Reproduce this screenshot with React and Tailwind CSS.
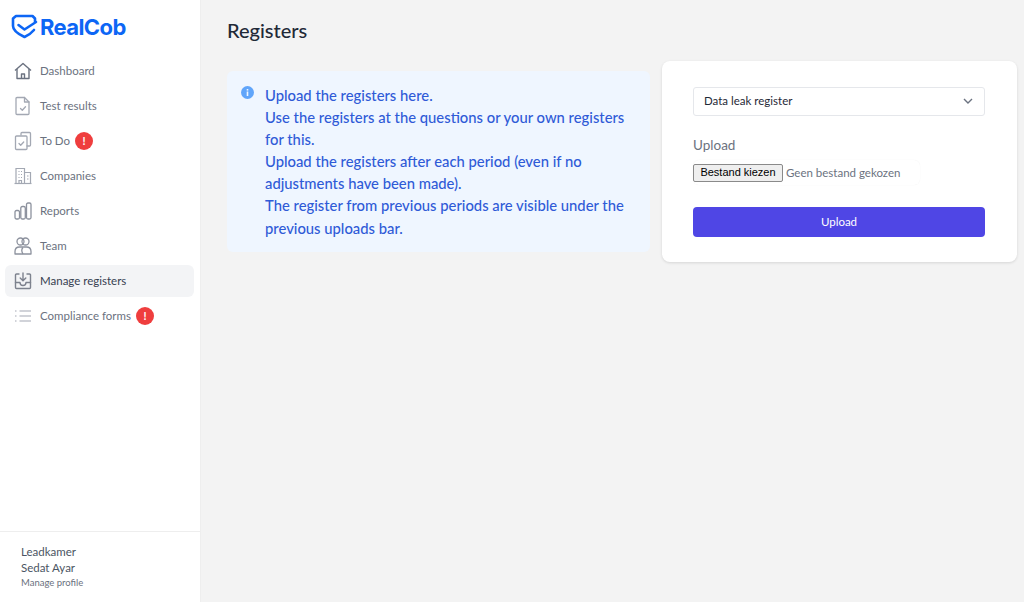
import React from 'react';

const Logo = () => (
  <svg width="27" height="26" viewBox="0 0 27 26" fill="none" stroke="#0d66f5" strokeWidth="2.600" strokeLinejoin="round" strokeLinecap="round">
    <path d="M24 7.500V4.500L21.500 2H5L2 4.500V12c0 4.500 5 8 11.500 11 3.500-1.500 7-4 9.500-7" />
    <path d="M7.500 11l6 4.500L25 8" />
  </svg>
);

const HomeIcon = () => (
  <svg width="18" height="18" viewBox="0 0 18 18" fill="none" stroke="#6b7280" strokeWidth="1.400" strokeLinejoin="round">
    <path d="M1 8.500L9 1.500l8 7" />
    <path d="M3 7v9.500h12V7" />
    <path d="M7.500 16.500v-4.500h3v4.500" />
  </svg>
);

const DocCheckIcon = () => (
  <svg width="18" height="20" viewBox="0 0 18 20" fill="none" stroke="#a3a8b3" strokeWidth="1.300" strokeLinejoin="round" strokeLinecap="round">
    <path d="M3 1.500h7.500l4.500 4.500v11.500a1 1 0 0 1-1 1H3a1 1 0 0 1-1-1v-15a1 1 0 0 1 1-1z" />
    <path d="M10.500 1.500V6H15" />
    <path d="M6.500 12.500l1.800 1.800 3.200-3.500" />
  </svg>
);

const TodoIcon = () => (
  <svg width="18" height="20" viewBox="0 0 18 20" fill="none" stroke="#a3a8b3" strokeWidth="1.300" strokeLinejoin="round" strokeLinecap="round">
    <path d="M7 4V2.500a1 1 0 0 1 1-1h7.500a1 1 0 0 1 1 1V14a1 1 0 0 1-1 1H13" />
    <path d="M2.500 5h9.500a1 1 0 0 1 1 1v11.500a1 1 0 0 1-1 1H2.500a1 1 0 0 1-1-1V6a1 1 0 0 1 1-1z" />
    <path d="M5 12.500l1.700 1.700 3-3.200" />
  </svg>
);

const BuildingIcon = () => (
  <svg width="18" height="18" viewBox="0 0 18 18" fill="none" stroke="#a3a8b3" strokeWidth="1.200">
    <path d="M.500 16.500h17" />
    <path d="M2 16.500V1.500h8.500v15" />
    <path d="M10.500 5.500h6v11" />
    <path d="M4.500 4.500h1M7 4.500h1M4.500 7.500h1M7 7.500h1M4.500 10.500h1M7 10.500h1M13 9h1.500M13 12h1.500" />
    <path d="M5 16.500v-3h2.500v3" />
  </svg>
);

const ReportsIcon = () => (
  <svg width="18" height="18" viewBox="0 0 18 18" fill="none" stroke="#8d929e" strokeWidth="1.300" strokeLinejoin="round">
    <rect x="1" y="8.500" width="4.500" height="8.500" rx="1.500" />
    <rect x="6.800" y="4.500" width="4.500" height="12.500" rx="1.500" />
    <rect x="12.500" y="1" width="4.500" height="16" rx="1.500" />
  </svg>
);

const TeamIcon = () => (
  <svg width="18" height="18" viewBox="0 0 18 18" fill="none" stroke="#8d929e" strokeWidth="1.300" strokeLinejoin="round">
    <circle cx="6.500" cy="4.500" r="3.500" />
    <circle cx="11.500" cy="4.500" r="3.500" />
    <path d="M1 17v-2.500C1 11.500 3 10 5.500 10h7c2.500 0 4.500 1.500 4.500 4.500V17z" />
    <path d="M9 10.500c-1.500 1.500-1.500 4 0 6.500" />
  </svg>
);

const InboxIcon = () => (
  <svg width="18" height="18" viewBox="0 0 18 18" fill="none" stroke="#7d828e" strokeWidth="1.400" strokeLinejoin="round" strokeLinecap="round">
    <path d="M5 2H2.500a1 1 0 0 0-1 1v12.500a1 1 0 0 0 1 1h13a1 1 0 0 0 1-1V3a1 1 0 0 0-1-1H13" />
    <path d="M1.500 10.500h4.500a3 3 0 0 0 6 0h4.500" />
    <path d="M9 1v7.500M6.200 6L9 8.800 11.800 6" />
  </svg>
);

const ListIcon = () => (
  <svg width="16" height="12" viewBox="0 0 16 12" fill="none" stroke="#a3a8b3" strokeWidth="1.200">
    <path d="M4.500 1H16M4.500 6H16M4.500 11H16" />
    <path d="M0 1h1.500M0 6h1.500M0 11h1.500" />
  </svg>
);

const Alert = () => (
  <span className="ml-[5px] flex h-[18px] w-[18px] items-center justify-center rounded-full bg-[#ef3e3e] text-[11px] font-bold text-white">
    !
  </span>
);

const navItems = [
  { label: 'Dashboard', icon: <HomeIcon /> },
  { label: 'Test results', icon: <DocCheckIcon /> },
  { label: 'To Do', icon: <TodoIcon />, alert: true },
  { label: 'Companies', icon: <BuildingIcon /> },
  { label: 'Reports', icon: <ReportsIcon /> },
  { label: 'Team', icon: <TeamIcon /> },
  { label: 'Manage registers', icon: <InboxIcon />, active: true },
  { label: 'Compliance forms', icon: <ListIcon />, alert: true },
];

function Sidebar() {
  return (
    <aside className="flex h-full w-[201px] shrink-0 flex-col border-r border-[#eeeeee] bg-white">
      {/* Logo */}
      <div className="flex h-[54px] items-center gap-[2px] pl-[11px]">
        <Logo />
        <span className="font-['Inter',sans-serif] text-[22px] font-bold tracking-[-0.6px] text-[#0d66f5]">RealCob</span>
      </div>

      {/* Nav */}
      <nav className="flex flex-col gap-[3px] pl-[5px] pr-[6px] pt-[1px]">
        {navItems.map((item) => (
          <div
            key={item.label}
            className={`flex h-[32px] items-center rounded-md ${item.active ? 'bg-[#f3f4f6] text-[#374151]' : 'text-[#6b7280]'}`}
          >
            <span className="flex w-[35px] shrink-0 justify-center">{item.icon}</span>
            <span className="text-[11.500px]">{item.label}</span>
            {item.alert && <Alert />}
          </div>
        ))}
      </nav>

      {/* Profile */}
      <div className="mt-auto flex h-[71px] flex-col border-t border-[#eeeeee] pl-[21px] pt-[12px] text-[11.500px] leading-[16px] text-[#4b5563]">
        <span>Leadkamer</span>
        <span>Sedat Ayar</span>
        <span className="text-[9.500px] leading-[14px] text-[#6b7280]">Manage profile</span>
      </div>
    </aside>
  );
}

function InfoBox() {
  return (
    <div className="mt-[10px] flex h-[181px] w-[423px] shrink-0 rounded-md bg-[#eff6ff] pl-[14px] pt-[13px]">
      <svg className="mt-[2px] shrink-0" width="13" height="13" viewBox="0 0 13 13">
        <circle cx="6.500" cy="6.500" r="6.500" fill="#60a5fa" />
        <rect x="5.700" y="5.500" width="1.600" height="4.500" fill="#eff6ff" />
        <rect x="5.700" y="3" width="1.600" height="1.600" fill="#eff6ff" />
      </svg>
      <div className="ml-[11px] w-[375px] text-[14.800px] font-medium leading-[22.100px] text-[#2f5bd7]">
        <p>Upload the registers here.</p>
        <p>Use the registers at the questions or your own registers for this.</p>
        <p>Upload the registers after each period (even if no adjustments have been made).</p>
        <p>The register from previous periods are visible under the previous uploads bar.</p>
      </div>
    </div>
  );
}

function UploadCard() {
  return (
    <div className="ml-[12px] h-[201px] w-[355px] shrink-0 rounded-lg bg-white pl-[31px] pt-[26px] shadow-[0_1px_3px_rgba(0,0,0,0.12)]">
      <div className="flex h-[29px] w-[292px] items-center justify-between rounded-[3px] border border-[#e5e7eb] pb-[1px] pl-[10px] pr-[11px] text-[11.500px] text-[#1f2937]">
        <span>Data leak register</span>
        <svg width="10" height="6" viewBox="0 0 10 6" fill="none" stroke="#6b7280" strokeWidth="1.400">
          <path d="M1 1l4 4 4-4" />
        </svg>
      </div>

      <div className="mt-[20px] text-[13.500px] leading-[18px] text-[#6b7280]">Upload</div>

      <div className="mt-[6px] flex h-[25px] w-[227px] items-center rounded-md shadow-[0_0_1px_rgba(0,0,0,0.08)]">
        <button className="h-[18px] w-[90px] rounded-[2px] border border-[#8a8a8a] bg-[#efefef] font-['Liberation_Sans',sans-serif] text-[11px] leading-none text-black">
          Bestand kiezen
        </button>
        <span className="ml-[3px] text-[11.500px] text-[#6b7280]">Geen bestand gekozen</span>
      </div>

      <button className="mt-[22px] h-[30px] w-[292px] rounded bg-[#4f46e5] text-[11.500px] text-white">Upload</button>
    </div>
  );
}

export default function App() {
  return (
    <div className="flex h-[602px] w-[1024px] overflow-hidden bg-[#f3f3f3] font-['Lato',sans-serif]">
      <Sidebar />
      <main className="flex-1 pl-[26px] pt-[18px]">
        <h1 className="text-[20px] font-medium leading-[24px] text-[#1f2937]">Registers</h1>
        <div className="mt-[19px] flex items-start">
          <InfoBox />
          <UploadCard />
        </div>
      </main>
    </div>
  );
}
